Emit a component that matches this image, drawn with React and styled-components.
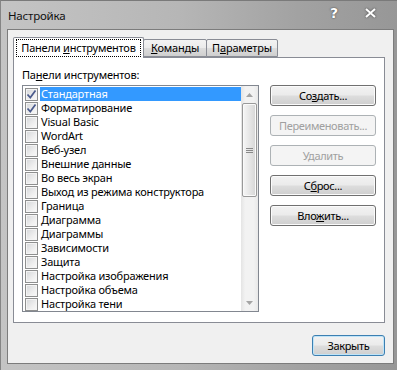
import React from 'react';
import styled, { createGlobalStyle } from 'styled-components';

const Global = createGlobalStyle`
  html, body { margin: 0; padding: 0; background: #fff; }
  body {
    font-family: "Noto Sans", "Open Sans", sans-serif;
    font-size: 11px;
    letter-spacing: -0.2px;
    line-height: 14px;
    color: #000;
  }
`;

const Frame = styled.div`
  width: 397px;
  height: 370px;
  box-sizing: border-box;
  display: flex;
  flex-direction: column;
  background: linear-gradient(to right, #c4c4c4 0%, #b6b6b6 45%, #a2a2a2 75%, #979797 100%);
  border-top: 1px solid #7a7a7a;
  border-left: 1px solid #858585;
  padding: 0 3px 6px 6px;
`;

const TitleBar = styled.div`
  height: 28px;
  display: flex;
  align-items: center;
  padding-left: 1px;
`;

const Title = styled.span`
  font-size: 11.5px;
  color: #111;
  flex: 1;
  margin-top: 2px;
`;

const Controls = styled.div`
  display: flex;
  align-items: center;
  gap: 27px;
  margin-right: 18px;
  margin-top: -4px;
`;

const HelpGlyph = styled.span`
  font-family: "DejaVu Sans", sans-serif;
  font-weight: bold;
  font-size: 14px;
  color: #fff;
  text-shadow: 0 0 2px #555, 0 0 1px #444;
`;

const Client = styled.div`
  flex: 1;
  border: 1px solid #7c7c7c;
  background: #f0f0f0;
  display: flex;
  flex-direction: column;
  padding: 7px 0 0 5px;
`;

const TabStrip = styled.div`
  display: flex;
  align-items: flex-start;
  height: 20px;
  position: relative;
  z-index: 1;
`;

const Tab = styled.div`
  box-sizing: border-box;
  width: ${p => p.$w}px;
  height: ${p => (p.$active ? 21 : 18)}px;
  margin-top: ${p => (p.$active ? 0 : 2)}px;
  margin-left: ${p => (p.$active ? 0 : -1)}px;
  border: 1px solid #898c95;
  border-bottom: ${p => (p.$active ? 'none' : '1px solid #898c95')};
  border-radius: 2px 2px 0 0;
  background: ${p => (p.$active ? '#fff' : 'linear-gradient(#f3f3f3, #ebebeb 50%, #dddddd 51%, #cfcfcf)')};
  display: flex;
  align-items: center;
  justify-content: center;
  white-space: nowrap;
  padding-bottom: ${p => (p.$active ? 1 : 0)}px;
`;

const Focus = styled.span`
  outline: 1px dotted #000;
  padding: 1px 4px 1px 4px;
  line-height: 14px;
`;

const Panel = styled.div`
  box-sizing: border-box;
  width: 372px;
  height: 266px;
  border: 1px solid #898c95;
  background: #fff;
  padding: 10px 0 0 8px;
  display: flex;
  flex-direction: column;
`;

const Label = styled.div`
  line-height: 14px;
  height: 14px;
  margin-bottom: 3px;
`;

const Body = styled.div`
  display: flex;
  gap: 11px;
`;

const ListBox = styled.div`
  box-sizing: border-box;
  width: 237px;
  height: 227px;
  border: 1px solid #828790;
  background: #fff;
  display: flex;
`;

const Items = styled.div`
  flex: 1;
  display: flex;
  flex-direction: column;
  padding-top: 1px;
`;

const Row = styled.div`
  height: 14px;
  display: flex;
  align-items: center;
  padding-left: 2px;
`;

const Check = styled.span`
  box-sizing: border-box;
  width: 13px;
  height: 13px;
  border: 1px solid #8e8f8f;
  background: linear-gradient(135deg, #d4d6d9 0%, #eeeeee 60%, #fafafa 100%);
  box-shadow: inset 0 0 0 1px #f4f4f4;
  display: flex;
  align-items: center;
  justify-content: center;
  margin-right: 2px;
  flex-shrink: 0;
`;

const ItemText = styled.span`
  flex: 1;
  height: 14px;
  line-height: 14px;
  padding-left: 1px;
  white-space: nowrap;
  background: ${p => (p.$selected ? '#3399ff' : 'transparent')};
  color: ${p => (p.$selected ? '#fff' : '#000')};
`;

const ScrollBar = styled.div`
  width: 17px;
  display: flex;
  flex-direction: column;
  background: linear-gradient(to right, #e4e4e4, #f2f2f2 25%, #f2f2f2 75%, #e8e8e8);
`;

const Arrow = styled.div`
  height: 17px;
  display: flex;
  align-items: center;
  justify-content: center;
`;

const Track = styled.div`
  flex: 1;
  display: flex;
  flex-direction: column;
`;

const Thumb = styled.div`
  box-sizing: border-box;
  height: 94px;
  margin: 0 1px;
  border: 1px solid #999;
  border-radius: 2px;
  background: linear-gradient(to right, #f6f6f6, #e6e6e6 50%, #d6d6d6);
  box-shadow: inset 0 0 0 1px #fafafa;
  display: flex;
  align-items: center;
  justify-content: center;
`;

const Buttons = styled.div`
  display: flex;
  flex-direction: column;
  gap: 9px;
`;

const Button = styled.button`
  box-sizing: border-box;
  width: ${p => p.$w || 106}px;
  height: 21px;
  padding: 0 0 1px;
  font-family: inherit;
  font-size: 11px;
  letter-spacing: -0.35px;
  white-space: nowrap;
  overflow: visible;
  border-radius: 3px;
  border: 1px solid ${p => (p.$default ? '#3c7fb1' : p.disabled ? '#adb2b5' : '#707070')};
  color: ${p => (p.disabled ? '#a0a0a0' : '#000')};
  background: ${p => (p.disabled
    ? '#f4f4f4'
    : 'linear-gradient(#f2f2f2 0%, #ebebeb 48%, #dddddd 52%, #cfcfcf 100%)')};
  box-shadow: inset 0 0 0 1px ${p => (p.$default ? '#bfe4f8' : p.disabled ? '#f4f4f4' : '#fbfbfb')};
`;

const Footer = styled.div`
  display: flex;
  justify-content: flex-end;
  padding: 12px 8px 0 0;
`;

const items = [
  'Стандартная', 'Форматирование', 'Visual Basic', 'WordArt', 'Веб-узел',
  'Внешние данные', 'Во весь экран', 'Выход из режима конструктора', 'Граница',
  'Диаграмма', 'Диаграммы', 'Зависимости', 'Защита', 'Настройка изображения',
  'Настройка объема', 'Настройка тени',
];

const Tick = () => (
  <svg width="11" height="11" viewBox="0 0 11 11">
    <path d="M1.5 5.5 L4.3 8.6 L9.5 1.5" fill="none" stroke="#4b5b8c" strokeWidth="1.7" />
  </svg>
);

export default function App() {
  return (
    <>
      <Global />
      <Frame>
        <TitleBar>
          <Title>Настройка</Title>
          <Controls>
            <HelpGlyph>?</HelpGlyph>
            <svg width="11" height="10" viewBox="0 0 11 10" style={{ filter: 'drop-shadow(0 0 1px #444)' }}>
              <path d="M1 1 L10 9 M10 1 L1 9" stroke="#fff" strokeWidth="2" />
            </svg>
          </Controls>
        </TitleBar>
        <Client>
          <TabStrip>
            <Tab $active $w={131}><Focus>Панели <u>и</u>нструментов</Focus></Tab>
            <Tab $w={64}><span><u>К</u>оманды</span></Tab>
            <Tab $w={72}><span>П<u>а</u>раметры</span></Tab>
          </TabStrip>
          <Panel>
            <Label>Па<u>н</u>ели инструментов:</Label>
            <Body>
              <ListBox>
                <Items>
                  {items.map((t, i) => (
                    <Row key={t}>
                      <Check>{i < 2 && <Tick />}</Check>
                      <ItemText $selected={i === 0}>{t}</ItemText>
                    </Row>
                  ))}
                </Items>
                <ScrollBar>
                  <Arrow>
                    <svg width="7" height="4" viewBox="0 0 7 4"><path d="M0 4 L3.5 0 L7 4 Z" fill="#a4a4a4" /></svg>
                  </Arrow>
                  <Track>
                    <Thumb>
                      <svg width="7" height="7" viewBox="0 0 7 7">
                        <path d="M0 1.5 H7 M0 3.5 H7 M0 5.5 H7" stroke="#888" strokeWidth="1" />
                      </svg>
                    </Thumb>
                  </Track>
                  <Arrow>
                    <svg width="7" height="4" viewBox="0 0 7 4"><path d="M0 0 L3.5 4 L7 0 Z" fill="#a4a4a4" /></svg>
                  </Arrow>
                </ScrollBar>
              </ListBox>
              <Buttons>
                <Button>Со<u>з</u>дать...</Button>
                <Button disabled>Переименовать...</Button>
                <Button disabled>Удалить</Button>
                <Button>С<u>б</u>рос...</Button>
                <Button>Вло<u>ж</u>ить...</Button>
              </Buttons>
            </Body>
          </Panel>
          <Footer>
            <Button $default $w={73}>Закрыть</Button>
          </Footer>
        </Client>
      </Frame>
    </>
  );
}
